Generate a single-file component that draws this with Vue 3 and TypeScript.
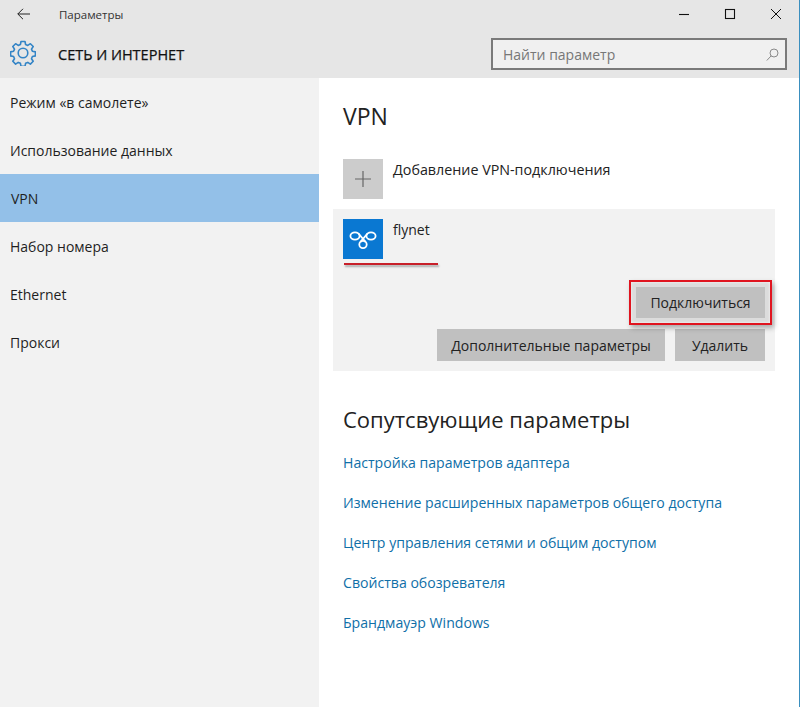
<script setup lang="ts">
const navItems = ['Режим «в самолете»', 'Использование данных', 'VPN', 'Набор номера', 'Ethernet', 'Прокси']
const links = [
  'Настройка параметров адаптера',
  'Изменение расширенных параметров общего доступа',
  'Центр управления сетями и общим доступом',
  'Свойства обозревателя',
  'Брандмауэр Windows',
]
</script>

<template>
  <div class="window">
    <header class="header">
      <div class="titlebar">
        <svg class="back" width="13" height="12" viewBox="0 0 13 12" fill="none" stroke="#222" stroke-width="1">
          <path d="M0.8 6H13M6 0.8L0.8 6L6 11.200" />
        </svg>
        <span class="title">Параметры</span>
        <div class="controls">
          <svg width="12" height="12" viewBox="0 0 12 12"><path d="M1 6.500H11" stroke="#111" stroke-width="1.100" /></svg>
          <svg width="12" height="12" viewBox="0 0 12 12"><rect x="1.500" y="1.500" width="9" height="9" fill="none" stroke="#111" stroke-width="1.100" /></svg>
          <svg width="12" height="12" viewBox="0 0 12 12"><path d="M1 1L11 11M11 1L1 11" stroke="#111" stroke-width="1" /></svg>
        </div>
      </div>
      <div class="subbar">
        <svg class="gear" width="26" height="26" viewBox="0 0 26 26" fill="none" stroke="#3384c6" stroke-width="1.600" stroke-linejoin="round">
          <path d="M11 1.500h4l.6 3 2.200.9 2.600-1.700 2.800 2.800-1.700 2.600.9 2.200 3 .6v4l-3 .6-.9 2.200 1.700 2.600-2.800 2.800-2.600-1.700-2.200.9-.6 3h-4l-.6-3-2.200-.9-2.600 1.700-2.800-2.800 1.700-2.600-.9-2.200-3-.6v-4l3-.6.9-2.200-1.700-2.600 2.800-2.800 2.600 1.700 2.200-.9z" />
          <circle cx="13" cy="13" r="4.800" />
        </svg>
        <h1 class="section">СЕТЬ И ИНТЕРНЕТ</h1>
        <div class="search">
          <span>Найти параметр</span>
          <svg width="13" height="13" viewBox="0 0 13 13" fill="none" stroke="#8a8a8a" stroke-width="1">
            <circle cx="8" cy="5" r="4" />
            <path d="M5.200 7.800L0.800 12.500" />
          </svg>
        </div>
      </div>
    </header>
    <div class="body">
      <nav class="sidebar">
        <div v-for="item in navItems" :key="item" class="nav-item" :class="{ active: item === 'VPN' }">{{ item }}</div>
      </nav>
      <main class="main">
        <h2 class="heading">VPN</h2>
        <div class="add-row">
          <div class="tile tile-grey">
            <svg width="16" height="16" viewBox="0 0 16 16"><path d="M8 0V16M0 8H16" stroke="#666" stroke-width="1.200" /></svg>
          </div>
          <span class="row-label add-label">Добавление VPN-подключения</span>
        </div>
        <section class="card">
          <div class="conn">
            <div class="tile tile-blue">
              <svg width="28" height="21" viewBox="0 0 28 21" fill="none" stroke="#fff" stroke-width="1.800">
                <ellipse cx="6" cy="7" rx="4.600" ry="3.700" />
                <ellipse cx="22" cy="7" rx="4.600" ry="3.700" />
                <circle cx="14" cy="15.500" r="3.700" />
                <path d="M9.500 4.500L16.500 12.800M18.500 4.500L11.500 12.800" />
              </svg>
            </div>
            <span class="row-label">flynet</span>
            <div class="underline"></div>
          </div>
          <div class="btn-row first">
            <div class="highlight">
              <button class="btn">Подключиться</button>
            </div>
          </div>
          <div class="btn-row second">
            <button class="btn wide">Дополнительные параметры</button>
            <button class="btn del">Удалить</button>
          </div>
        </section>
        <h2 class="related">Сопутсвующие параметры</h2>
        <ul class="links">
          <li v-for="link in links" :key="link">{{ link }}</li>
        </ul>
      </main>
    </div>
  </div>
</template>

<style>
html, body { margin: 0; background: #fff; }
</style>

<style scoped>
.window {
  width: 800px;
  height: 707px;
  display: flex;
  flex-direction: column;
  overflow: hidden;
  font-family: "Open Sans", "Noto Sans", sans-serif;
  font-size: 14px;
  color: #222;
  box-sizing: border-box;
  border-right: 1px solid #3a8fbf;
}
.header { height: 78px; background: #e6e6e6; flex: none; }
.titlebar { height: 28px; display: flex; align-items: center; padding-left: 17px; }
.title { margin-left: 29px; font-size: 11.500px; color: #333; }
.controls { margin-left: auto; display: flex; gap: 34px; padding-right: 17px; }
.subbar { height: 50px; display: flex; align-items: center; padding: 2px 0 0 10px; box-sizing: border-box; }
.section { margin: 0 0 0 22px; font-size: 14.500px; font-weight: 400; color: #111; -webkit-text-stroke: 0.25px #111; }
.gear { flex: none; margin-top: -2px; }
.search {
  margin-left: auto;
  margin-right: 12px;
  width: 296px;
  height: 32px;
  box-sizing: border-box;
  border: 2px solid #7a7a7a;
  background: #f0f0f0;
  display: flex;
  align-items: center;
  justify-content: space-between;
  padding: 0 6px 0 10px;
  font-size: 14px;
  color: #777;
}
.body { flex: 1; display: flex; min-height: 0; }
.sidebar { width: 319px; background: #f2f2f2; flex: none; }
.nav-item { height: 48px; display: flex; align-items: center; padding-left: 10px; font-size: 14px; color: #1f1f1f; }
.nav-item.active { background: #93c0e8; padding-left: 11px; }
.main { flex: 1; padding: 0 0 0 14px; }
.heading { margin: 24px 0 0 10px; height: 30px; line-height: 28px; font-size: 23px; font-weight: 400; color: #222; }
.add-row { display: flex; margin: 27px 0 0 10px; height: 40px; }
.tile { width: 40px; height: 40px; flex: none; display: flex; align-items: center; justify-content: center; }
.tile-grey { background: #cccccc; }
.tile-blue { background: #0a78d2; }
.row-label { margin-left: 10px; line-height: 22px; font-size: 14px; }
.add-label { font-size: 14.300px; }
.card { background: #f2f2f2; width: 442px; height: 162px; margin-top: 10px; padding: 10px; box-sizing: border-box; }
.conn { display: flex; height: 40px; position: relative; }
.underline {
  position: absolute;
  left: 1px;
  top: 44px;
  width: 94px;
  height: 2px;
  background: #c8202a;
  box-shadow: 1px 2px 2px rgba(0, 0, 0, 0.3);
}
.btn-row { display: flex; justify-content: flex-end; gap: 10px; }
.first { margin-top: 21px; }
.second { margin-top: 4px; }
.highlight {
  border: 2px solid #e0141f;
  padding: 5px;
  margin: 0 -7px;
  background: #dcdcdc;
  box-shadow: 2px 3px 5px rgba(0, 0, 0, 0.3), inset 0 0 3px rgba(255, 255, 255, 0.8);
  position: relative;
}
.btn {
  display: block;
  border: 0;
  background: #c0c0c0;
  font: inherit;
  font-size: 14px;
  color: #222;
  height: 32px;
  padding: 0;
}
.first .btn { width: 129px; height: 31px; }
.wide { width: 228px; }
.del { width: 90px; }
.related { margin: 33px 0 0 10px; font-size: 22px; font-weight: 400; line-height: 30px; color: #222; }
.links { list-style: none; margin: 17px 0 0 10px; padding: 0; color: #0f6fa8; font-size: 14.100px; }
.links li { height: 40px; line-height: 24px; }
</style>
